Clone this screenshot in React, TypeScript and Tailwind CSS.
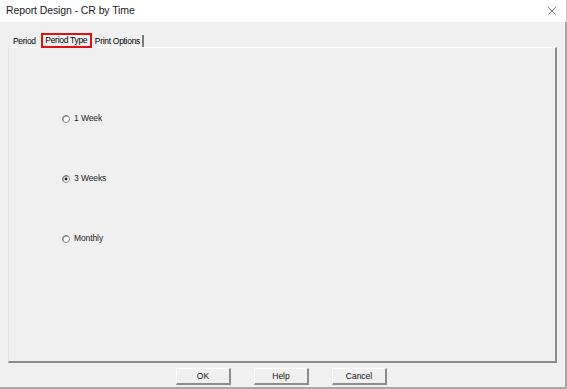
import { X } from 'lucide-react'

const options = [
  { label: '1 Week', checked: false },
  { label: '3 Weeks', checked: true },
  { label: 'Monthly', checked: false },
]

function Radio({ checked }: { checked: boolean }) {
  return (
    <svg width="8" height="8" viewBox="0 0 8 8" className="shrink-0">
      <circle cx="4" cy="4" r="3.5" fill="#ffffff" stroke="#8a8a8a" strokeWidth="1" />
      <path d="M1.2 5.8 A3.5 3.5 0 0 1 5.8 1.2" fill="none" stroke="#6b6b6b" strokeWidth="1" />
      {checked && <circle cx="4" cy="4" r="1.4" fill="#1a1a1a" />}
    </svg>
  )
}

function DlgButton({ label }: { label: string }) {
  return (
    <button className="w-[55px] h-[17px] bg-[#f0f0f0] border-t border-l border-t-white border-l-white border-r-2 border-b-2 border-r-[#8c8c8c] border-b-[#8c8c8c] text-[8.5px] leading-none text-[#111] flex items-center justify-center">
      {label}
    </button>
  )
}

export default function App() {
  return (
    <div className="w-[567px] h-[389px] flex flex-col bg-[#f0f0f0] font-['Liberation_Sans',Arial,sans-serif] text-black overflow-hidden">
      {/* title bar */}
      <div className="h-[22px] bg-white flex items-center justify-between pl-[6px] pr-[7px] border-r border-r-[#c8c8c8]">
        <span className="text-[10.5px] text-[#1a1a1a] tracking-[-0.1px]">Report Design - CR by Time</span>
        <X className="w-[14px] h-[14px] text-[#222]" strokeWidth={1.1} />
      </div>

      <div className="flex-1 flex flex-col border-r-2 border-r-[#a8a8a8] border-b-2 border-b-[#a8a8a8]">
        {/* tabs */}
        <div className="flex items-end pl-[10px] mt-[11px] h-[14px] text-[8.5px] leading-none tracking-[-0.3px] whitespace-nowrap">
          <div className="h-[12px] px-[3px] flex items-center">Period</div>
          <div className="h-[15px] w-[51px] -mb-[1px] ml-[2px] border-2 border-[#e31010] flex items-center justify-center bg-[#f0f0f0] relative z-10">
            Period Type
          </div>
          <div className="h-[12px] pl-[3px] pr-[2px] flex items-center border-r-2 border-r-[#7a7a7a]">Print Options</div>
        </div>

        {/* panel */}
        <div className="ml-[8px] mr-[8px] h-[316px] border-t border-t-white border-l border-l-[#e4e4e4] border-r-2 border-r-[#8a8a8a] border-b-2 border-b-[#8a8a8a] flex flex-col pl-[53px] pt-[66px] gap-[51px]">
          {options.map(o => (
            <div key={o.label} className="flex items-center gap-[4px] h-[9px] text-[8.5px] leading-none text-[#1a1a1a] tracking-[-0.1px]">
              <Radio checked={o.checked} />
              <span>{o.label}</span>
            </div>
          ))}
        </div>

        {/* buttons */}
        <div className="flex justify-center gap-[23px] mt-[5px] pr-[2px]">
          <DlgButton label="OK" />
          <DlgButton label="Help" />
          <DlgButton label="Cancel" />
        </div>
      </div>
    </div>
  )
}
